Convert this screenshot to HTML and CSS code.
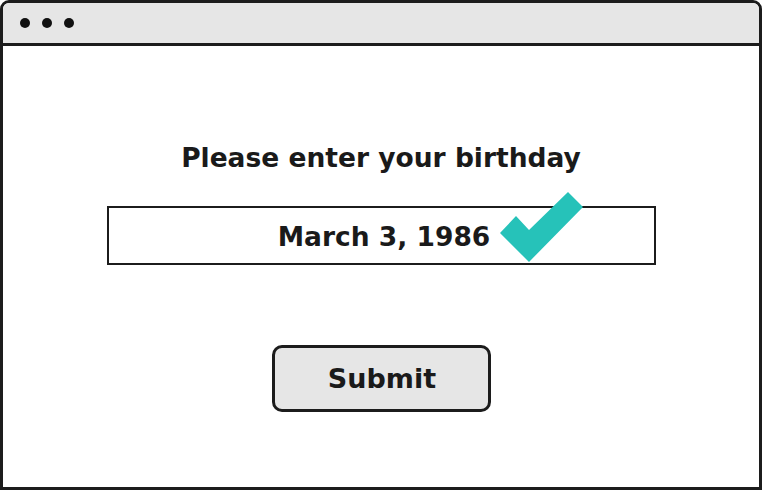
FILE: index.html
```html
<!DOCTYPE html>
<html>
<head>
<meta charset="utf-8">
<link rel="stylesheet" href="styles.css">
</head>
<body>
<div class="window">
  <div class="titlebar">
    <span class="dot"></span><span class="dot"></span><span class="dot"></span>
  </div>
  <div class="content">
    <h1 class="title">Please enter your birthday</h1>
    <div class="field">
      <span class="value">March 3, 1986</span>
      <svg class="check" width="84" height="71" viewBox="0 0 84 71">
        <polygon points="0,41 16,24 29,38 68,0 83,15 29,70" fill="#26c2b9"/>
      </svg>
    </div>
    <button class="submit">Submit</button>
  </div>
</div>
</body>
</html>
```
FILE: styles.css
```css
html, body {
  margin: 0;
  padding: 0;
  background: #ffffff;
}
.window {
  box-sizing: border-box;
  width: 762px;
  height: 490px;
  border: 3px solid #1c1c1c;
  border-radius: 9px 9px 0 0;
  display: flex;
  flex-direction: column;
  font-family: "DejaVu Sans", "Liberation Sans", sans-serif;
  color: #1a1a1a;
}
.titlebar {
  box-sizing: border-box;
  height: 43px;
  background: #e6e6e6;
  border-bottom: 3px solid #1c1c1c;
  border-radius: 6px 6px 0 0;
  display: flex;
  align-items: center;
  gap: 12px;
  padding-left: 17px;
  padding-bottom: 1px;
}
.dot {
  width: 10px;
  height: 10px;
  border-radius: 50%;
  background: #111;
}
.content {
  display: flex;
  flex-direction: column;
  align-items: center;
}
.title {
  margin: 95px 0 0 0;
  font-size: 26.5px;
  font-weight: 700;
  line-height: 34px;
}
.field {
  position: relative;
  box-sizing: border-box;
  margin-top: 31px;
  width: 549px;
  height: 59px;
  border: 2.5px solid #1c1c1c;
  display: flex;
  align-items: center;
  justify-content: center;
}
.value {
  font-size: 26.5px;
  font-weight: 700;
  padding-left: 6px;
  padding-top: 2px;
}
.check {
  position: absolute;
  left: 391px;
  top: -16px;
}
.submit {
  box-sizing: border-box;
  margin-top: 80px;
  width: 219px;
  height: 67px;
  border: 3px solid #1c1c1c;
  border-radius: 10px;
  background: #e6e6e6;
  font-family: "DejaVu Sans", "Liberation Sans", sans-serif;
  font-size: 27px;
  font-weight: 700;
  color: #1a1a1a;
  padding: 0 0 0 2px;
}
```
